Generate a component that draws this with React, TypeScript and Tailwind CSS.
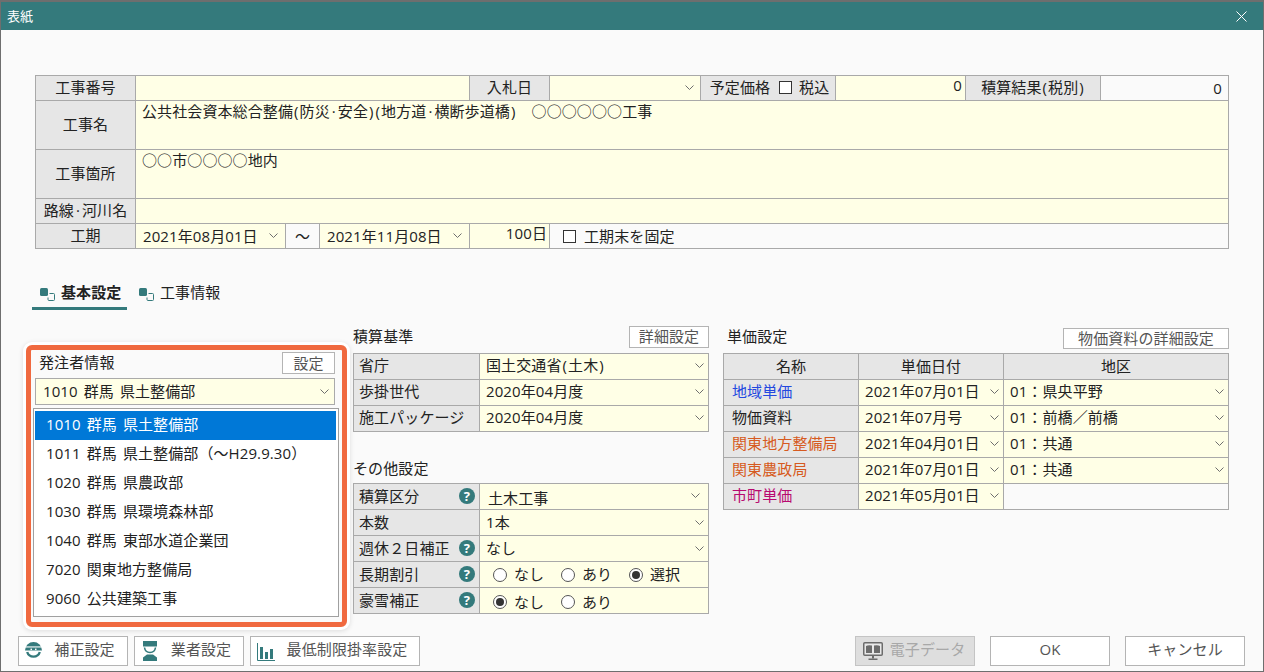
import React from "react";

const Chevron = ({ className = "" }: { className?: string }) => (
  <svg width="9" height="6" viewBox="0 0 9 6" className={`shrink-0 ${className}`} fill="none" stroke="#6e6e6e" strokeWidth="1">
    <path d="M0.5 0.5 L4.5 4.5 L8.5 0.5" />
  </svg>
);

const Help = () => (
  <span className="flex h-4 w-4 shrink-0 items-center justify-center rounded-full bg-[#347a7c] text-[13px] font-bold leading-none text-white">?</span>
);

const Check = () => <span className="inline-block h-[13px] w-[13px] shrink-0 border border-[#333] bg-white" />;

const Radio = ({ on = false }: { on?: boolean }) => (
  <span className="flex h-[14px] w-[14px] shrink-0 items-center justify-center rounded-full border border-[#555] bg-white">
    {on && <span className="h-2 w-2 rounded-full bg-[#333]" />}
  </span>
);

const TabIcon = () => (
  <svg width="15" height="14" viewBox="0 0 15 14" className="shrink-0 translate-y-[3px]">
    <rect x="0" y="0" width="8" height="8" rx="1.5" fill="#347a7c" />
    <path d="M9.5 5.5 H13.5 a1 1 0 0 1 1 1 V11.5 a1 1 0 0 1 -1 1 H9 a1 1 0 0 1 -1 -1 V9.5" fill="none" stroke="#347a7c" strokeWidth="1" />
  </svg>
);

// Paren and middle dot are wider in the reference's face than in the fallback face.
const W = ({ children }: { children: React.ReactNode }) => <span className="px-px">{children}</span>;
const D = () => <span className="px-[2px]">·</span>;

const Label = ({ children, className = "" }: { children: React.ReactNode; className?: string }) => (
  <div className={`flex items-center justify-center bg-[#e6e6e6] pb-px ${className}`}>{children}</div>
);

const SelectCell = ({
  children,
  chevronClass = "pr-[6px]",
  className = "",
  iconClass = "",
}: {
  children?: React.ReactNode;
  chevronClass?: string;
  className?: string;
  iconClass?: string;
}) => (
  <div className={`flex items-center justify-between bg-[#ffffe6] pl-[6px] ${chevronClass} ${className}`}>
    <span className="whitespace-nowrap">{children}</span>
    <Chevron className={iconClass} />
  </div>
);

const SideLabel = ({ children, help = false, className = "pb-px" }: { children: React.ReactNode; help?: boolean; className?: string }) => (
  <div className={`flex items-center justify-between bg-[#e6e6e6] pl-[5px] pr-[4px] ${className}`}>
    <span className="whitespace-nowrap">{children}</span>
    {help && <Help />}
  </div>
);

const Btn = ({ children, className = "" }: { children: React.ReactNode; className?: string }) => (
  <div className={`flex items-center justify-center border border-[#b4b4b4] bg-white text-[#555] ${className}`}>{children}</div>
);

const listItems = [
  "1010 群馬 県土整備部",
  "1011 群馬 県土整備部（～H29.9.30）",
  "1020 群馬 県農政部",
  "1030 群馬 県環境森林部",
  "1040 群馬 東部水道企業団",
  "7020 関東地方整備局",
  "9060 公共建築工事",
];

const priceRows = [
  { name: "地域単価", color: "text-[#2348e0]", date: "2021年07月01日", area: "01：県央平野" },
  { name: "物価資料", color: "text-[#222]", date: "2021年07月号", area: "01：前橋／前橋" },
  { name: "関東地方整備局", color: "text-[#d65a20]", date: "2021年04月01日", area: "01：共通" },
  { name: "関東農政局", color: "text-[#d65a20]", date: "2021年07月01日", area: "01：共通" },
  { name: "市町単価", color: "text-[#b80a70]", date: "2021年05月01日", area: "" },
];

export default function App() {
  return (
    <div className="flex h-[672px] w-[1264px] flex-col overflow-hidden border border-t-2 border-[#6e6e6e] bg-[#fafafa] font-['Open_Sans','Noto_Sans_CJK_JP',sans-serif] text-[15px] leading-none tracking-[0.1px] text-[#222] [word-spacing:2px]">
      {/* title bar */}
      <div className="flex h-[28px] shrink-0 items-center justify-between bg-[#347a7c] pl-[6px] pr-[16px] text-[13px] text-white">
        <span>表紙</span>
        <svg width="11" height="11" viewBox="0 0 11 11" stroke="#fff" strokeWidth="1" fill="none">
          <path d="M0.5 0.5 L10.5 10.5 M10.5 0.5 L0.5 10.5" />
        </svg>
      </div>

      {/* header table */}
      <div className="ml-[34px] mt-[45px] flex w-[1194px] shrink-0 flex-col gap-px border border-[#a9a9a9] bg-[#a9a9a9]">
        <div className="flex h-[24px] gap-px">
          <Label className="w-[99px]">工事番号</Label>
          <div className="w-[333px] bg-[#ffffe6]" />
          <Label className="w-[79px]">入札日</Label>
          <SelectCell className="w-[150px]" />
          <Label className="w-[134px] gap-[9px] pl-[3px]">
            <span>予定価格</span>
            <Check />
            <span className="-ml-[2px]">税込</span>
          </Label>
          <div className="flex w-[129px] justify-end bg-[#ffffe6] pr-[3px] pt-[2px]">0</div>
          <Label className="w-[134px]">
            <span>積算結果<W>(</W>税別<W>)</W></span>
          </Label>
          <div className="flex flex-1 items-center justify-end bg-[#fafafa] pr-[6px]">0</div>
        </div>
        <div className="flex h-[48px] gap-px">
          <Label className="w-[99px]">工事名</Label>
          <div className="flex-1 whitespace-pre bg-[#ffffe6] pl-[6px] pt-[3px]">
            公共社会資本総合整備<W>(</W>防災<D />安全<W>)</W><W>(</W>地方道<D />横断歩道橋<W>)</W>　○○○○○○工事
          </div>
        </div>
        <div className="flex h-[48px] gap-px">
          <Label className="w-[99px]">工事箇所</Label>
          <div className="flex-1 bg-[#ffffe6] pl-[6px] pt-[3px]">○○市○○○○地内</div>
        </div>
        <div className="flex h-[24px] gap-px">
          <Label className="w-[99px]">
            <span>路線<D />河川名</span>
          </Label>
          <div className="flex-1 bg-[#ffffe6]" />
        </div>
        <div className="flex h-[24px] gap-px">
          <Label className="w-[99px]">工期</Label>
          <SelectCell className="w-[149px] !pl-[7px]" chevronClass="pr-[7px]">2021年08月01日</SelectCell>
          <div className="flex w-[33px] items-center justify-center bg-[#fafafa]">～</div>
          <SelectCell className="w-[149px] !pl-[7px]" chevronClass="pr-[7px]">2021年11月08日</SelectCell>
          <div className="flex w-[79px] justify-end bg-[#ffffe6] pr-[2px] pt-[2px]">100日</div>
          <div className="flex flex-1 items-center gap-[8px] bg-[#fafafa] pl-[13px]">
            <Check />
            <span>工期末を固定</span>
          </div>
        </div>
      </div>

      {/* tabs */}
      <div className="ml-[31px] mt-[31px] flex h-[30px] shrink-0 gap-[4px]">
        <div className="flex w-[95px] items-center gap-[6px] border-b-[3px] border-[#347a7c] pb-[3px] pl-[8px] font-bold">
          <TabIcon />
          <span>基本設定</span>
        </div>
        <div className="flex items-center gap-[6px] pb-[6px] pl-[8px]">
          <TabIcon />
          <span>工事情報</span>
        </div>
      </div>

      {/* main area */}
      <div className="mt-[16px] flex h-[302px] shrink-0 items-start">
        {/* orderer panel */}
        <div className="ml-[25px] mt-[19px] flex h-[282px] w-[321px] shrink-0 flex-col rounded-[6px] border-[5px] border-[#f0693f] shadow-[0_0_0_3px_#ffffff,0_1px_5px_3px_rgba(0,0,0,0.12)]">
          <div className="flex h-[28px] shrink-0 items-start justify-between pl-[8px] pr-[7px]">
            <span className="mt-[5px]">発注者情報</span>
            <Btn className="mt-[2px] h-[22px] w-[53px]">設定</Btn>
          </div>
          <div className="ml-[4px] flex h-[27px] w-[300px] shrink-0 items-center justify-between border border-[#aaa] bg-[#ffffe6] pl-[7px] pr-[5px]">
            <span>1010 群馬 県土整備部</span>
            <Chevron />
          </div>
          <div className="ml-[2px] mt-[3px] h-[209px] w-[306px] border border-[#a0a0a0] bg-white pl-px pr-[2px] pt-[2px]">
            {listItems.map((t, i) => (
              <div key={t} className={`flex h-[29px] items-center pb-[3px] pl-[11px] ${i === 0 ? "bg-[#0078d7] text-white" : ""}`}>
                {t}
              </div>
            ))}
          </div>
        </div>

        {/* estimate settings */}
        <div className="ml-[6px] flex w-[356px] shrink-0 flex-col">
          <div className="mb-[5px] flex h-[22px] items-center justify-between">
            <span className="-translate-y-px">積算基準</span>
            <Btn className="h-[22px] w-[80px] pb-[2px]">詳細設定</Btn>
          </div>
          <div className="grid grid-cols-[125px_228px] auto-rows-[25px] gap-px border border-[#a9a9a9] bg-[#a9a9a9]">
            <SideLabel className="pb-[2px]">省庁</SideLabel>
            <SelectCell chevronClass="pr-[4px] pb-[2px]">
              国土交通省<W>(</W>土木<W>)</W>
            </SelectCell>
            <SideLabel className="pb-[2px]">歩掛世代</SideLabel>
            <SelectCell chevronClass="pr-[4px] pb-[2px]">2020年04月度</SelectCell>
            <SideLabel className="pb-[2px]">施工パッケージ</SideLabel>
            <SelectCell chevronClass="pr-[4px] pb-[2px]">2020年04月度</SelectCell>
          </div>
          <div className="mt-[21px] flex h-[30px] items-center">その他設定</div>
          <div className="grid grid-cols-[125px_228px] auto-rows-[25px] gap-px border border-[#a9a9a9] bg-[#a9a9a9]">
            <SideLabel help>積算区分</SideLabel>
            <SelectCell chevronClass="pr-[8px] pt-[3px]" className="!pl-[8px]" iconClass="-translate-y-[2px]">土木工事</SelectCell>
            <SideLabel>本数</SideLabel>
            <SelectCell chevronClass="pr-[4px]">1本</SelectCell>
            <SideLabel help>週休２日補正</SideLabel>
            <SelectCell chevronClass="pr-[4px]">なし</SelectCell>
            <SideLabel help>長期割引</SideLabel>
            <div className="flex items-center bg-[#ffffe6] pl-[13px]">
              <Radio />
              <span className="ml-[7px] w-[47px]">なし</span>
              <Radio />
              <span className="ml-[7px] w-[47px]">あり</span>
              <Radio on />
              <span className="ml-[7px]">選択</span>
            </div>
            <SideLabel help>豪雪補正</SideLabel>
            <div className="flex items-center bg-[#ffffe6] pl-[13px] pt-[3px]">
              <Radio on />
              <span className="ml-[7px] w-[47px]">なし</span>
              <Radio />
              <span className="ml-[7px]">あり</span>
            </div>
          </div>
        </div>

        {/* unit price */}
        <div className="ml-[14px] flex w-[506px] shrink-0 flex-col">
          <div className="mb-[4px] mt-[2px] flex h-[21px] items-center justify-between pl-[4px]">
            <span className="-translate-y-[2px]">単価設定</span>
            <Btn className="h-[21px] w-[166px]">物価資料の詳細設定</Btn>
          </div>
          <div className="grid grid-cols-[134px_144px_224px] auto-rows-[25px] gap-px border border-[#a9a9a9] bg-[#a9a9a9]">
            <Label>名称</Label>
            <Label>単価日付</Label>
            <Label>地区</Label>
            {priceRows.map((r) => (
              <React.Fragment key={r.name}>
                <div className={`flex items-center bg-[#e6e6e6] pb-[2px] pl-[8px] ${r.color}`}>{r.name}</div>
                <SelectCell chevronClass="pr-[4px] pb-[2px]">{r.date}</SelectCell>
                {r.area ? <SelectCell chevronClass="pr-[4px] pb-[2px]">{r.area}</SelectCell> : <div className="bg-[#fafafa]" />}
              </React.Fragment>
            ))}
          </div>
        </div>
      </div>

      {/* footer */}
      <div className="mt-[8px] flex h-[30px] shrink-0 items-stretch pl-[17px] pr-[18px] text-[#555]">
        <Btn className="w-[110px] gap-[11px] pb-[3px] pr-[7px]">
          <svg width="19" height="19" viewBox="0 0 19 19" className="translate-y-px">
            <path d="M1 9.5 a8.5 8.5 0 0 1 17 0 Z" fill="#347a7c" />
            <rect x="0" y="5.4" width="19" height="1.1" fill="#fff" />
            <rect x="6.5" y="7.6" width="1.5" height="1.5" fill="#fff" />
            <rect x="11" y="7.6" width="1.5" height="1.5" fill="#fff" />
            <path d="M3.2 11 a6.6 6.6 0 0 0 12.6 0" fill="none" stroke="#347a7c" strokeWidth="2.4" />
          </svg>
          <span>補正設定</span>
        </Btn>
        <Btn className="ml-[6px] w-[110px] gap-[14px] pb-[3px] pr-[4px]">
          <svg width="14" height="20" viewBox="0 0 14 20" className="translate-y-px">
            <rect x="0" y="0" width="14" height="5.5" fill="#347a7c" />
            <path d="M1.5 6.5 C2 10 4.5 11.5 7 11.5 C9.5 11.5 12 10 12.5 6.5" fill="none" stroke="#347a7c" strokeWidth="1.6" />
            <path d="M4 13.5 H10 L14 16.5 V20 H0 V16.5 Z" fill="#347a7c" />
          </svg>
          <span>業者設定</span>
        </Btn>
        <Btn className="ml-[6px] w-[170px] gap-[12px] pb-[3px] pr-[6px]">
          <svg width="18" height="18" viewBox="0 0 18 18" className="translate-y-[2px]">
            <path d="M0.5 0 V17.5 H18" fill="none" stroke="#347a7c" strokeWidth="1" />
            <rect x="3" y="4" width="3" height="12" fill="#347a7c" />
            <rect x="8" y="9" width="3" height="7" fill="#347a7c" />
            <rect x="13" y="6" width="3" height="10" fill="#347a7c" />
          </svg>
          <span>最低制限掛率設定</span>
        </Btn>
        <div className="ml-auto flex gap-[15px]">
          <div className="flex w-[120px] items-center justify-center gap-[7px] border border-[#c4c4c4] bg-[#dedede] pb-[3px] pr-[2px] text-[#a8a8a8]">
            <svg width="20" height="18" viewBox="0 0 20 18" className="translate-y-px">
              <rect x="0.75" y="0.75" width="18.5" height="12.5" rx="1" fill="#e8e8e8" stroke="#6c6c6c" strokeWidth="1.5" />
              <path d="M3 4 Q5 2.8 9 3.5 V11 H3 Z M17 4 Q15 2.8 11 3.5 V11 H17 Z" fill="#6c6c6c" />
              <rect x="9" y="14" width="2" height="2.5" fill="#6c6c6c" />
              <rect x="5.5" y="16.5" width="9" height="1.5" fill="#6c6c6c" />
            </svg>
            <span>電子データ</span>
          </div>
          <Btn className="w-[120px] pb-[3px]">OK</Btn>
          <Btn className="w-[120px] pb-[3px]">キャンセル</Btn>
        </div>
      </div>
    </div>
  );
}
